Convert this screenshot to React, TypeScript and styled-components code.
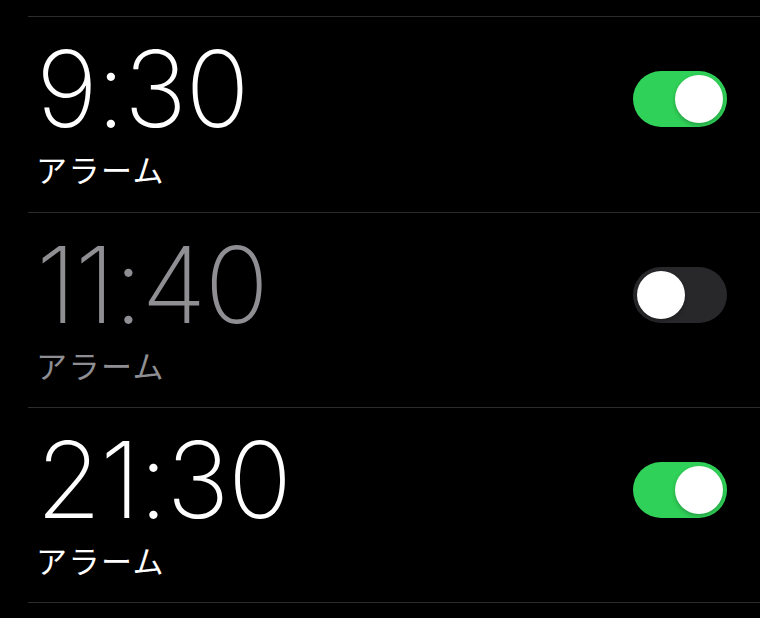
import { FC } from "react"
import styled, { createGlobalStyle } from "styled-components"

interface Alarm {
	time: string,
	label: string,
	enabled: boolean,
}

const alarms: Alarm[] = [
	{ time: "9:30", label: "アラーム", enabled: true },
	{ time: "11:40", label: "アラーム", enabled: false },
	{ time: "21:30", label: "アラーム", enabled: true },
]

const Toggle: FC<{ on: boolean }> = ({ on }) => (
	<Track $on={on}>
		<Knob />
	</Track>
)

const App: FC = () => {
	return (
		<>
			<GlobalStyle />
			<List>
				{alarms.map((a) => (
					<Row key={a.time}>
						<Info>
							<Time $on={a.enabled}>{a.time}</Time>
							<Label $on={a.enabled}>{a.label}</Label>
						</Info>
						<Toggle on={a.enabled} />
					</Row>
				))}
			</List>
		</>
	)
}

export default App

const GlobalStyle = createGlobalStyle`
	html, body {
		margin: 0;
		padding: 0;
		background: #000000;
	}
	body {
		width: 760px;
		height: 618px;
		overflow: hidden;
		font-family: Inter, "Noto Sans CJK JP", sans-serif;
	}
`
const List = styled.div`
	padding: 16px 0 0 28px;
	display: flex;
	flex-direction: column;
`
const Row = styled.div`
	box-sizing: border-box;
	height: 195.5px;
	border-top: 1px solid #2c2c2e;
	&:last-child {
		border-bottom: 1px solid #2c2c2e;
	}
	display: flex;
	align-items: flex-start;
	justify-content: space-between;
	padding: 24px 33px 0 8px;
`
const Info = styled.div`
	display: flex;
	flex-direction: column;
`
const Time = styled.div<{ $on: boolean }>`
	font-family: Inter, sans-serif;
	font-weight: 200;
	font-size: 106px;
	line-height: 96px;
	letter-spacing: -1.5px;
	color: ${(p) => (p.$on ? "#FFFFFF" : "#8E8E93")};
`
const Label = styled.div<{ $on: boolean }>`
	margin-top: 16px;
	font-family: "Noto Sans CJK JP", sans-serif;
	font-weight: 400;
	font-size: 31px;
	line-height: 31px;
	letter-spacing: 1.5px;
	color: ${(p) => (p.$on ? "#FFFFFF" : "#8E8E93")};
`
const Track = styled.div<{ $on: boolean }>`
	box-sizing: border-box;
	margin-top: 30px;
	width: 94px;
	height: 56px;
	border-radius: 28px;
	padding: 4px;
	display: flex;
	justify-content: ${(p) => (p.$on ? "flex-end" : "flex-start")};
	background: ${(p) => (p.$on ? "#30D158" : "#28282B")};
`
const Knob = styled.div`
	width: 48px;
	height: 48px;
	border-radius: 50%;
	background: #FFFFFF;
	box-shadow: 0 2px 4px rgba(0, 0, 0, 0.25);
`
